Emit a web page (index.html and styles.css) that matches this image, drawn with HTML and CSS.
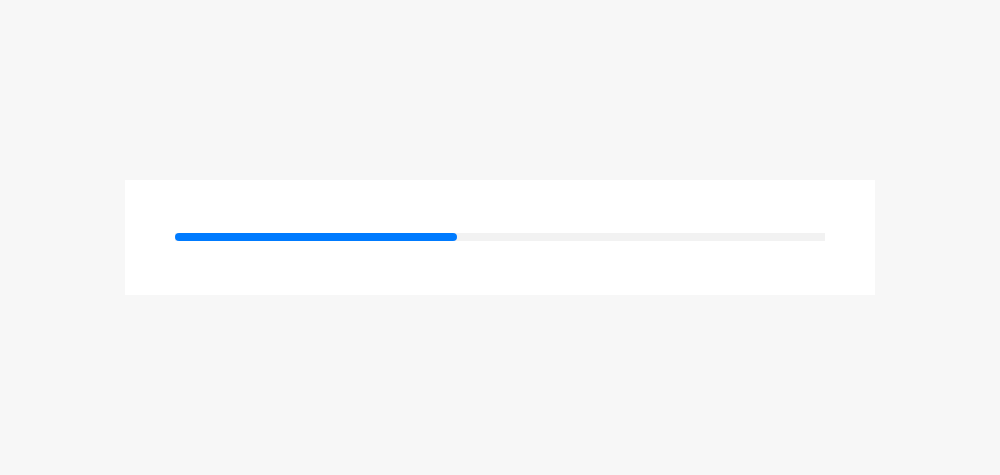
FILE: index.html
```html
<!DOCTYPE html>
<html lang="en">
<head>
    <meta charset="UTF-8">
    <meta name="viewport" content="width=device-width, initial-scale=1.0">
    <title>Upload progress</title>
    <link rel="stylesheet" href="styles.css">
</head>
<body>
    <div class="panel">
        <div class="progress" role="progressbar" aria-valuenow="43" aria-valuemin="0" aria-valuemax="100">
            <div class="progress-fill" style="width: 43.4%"></div>
        </div>
    </div>
</body>
</html>
```

FILE: styles.css
```css
html, body {
    height: 100%;
}
body {
    margin: 0;
    background-color: #f7f7f7;
    font-family: "Liberation Sans", Arial, sans-serif;
    display: flex;
    align-items: center;
    justify-content: center;
}
.panel {
    width: 750px;
    box-sizing: border-box;
    padding: 53px 50px 54px;
    background-color: #fff;
}
.progress {
    height: 8px;
    background-color: #f2f2f2;
}
.progress-fill {
    height: 100%;
    background-color: #007bff;
    border-radius: 4px;
}
```
